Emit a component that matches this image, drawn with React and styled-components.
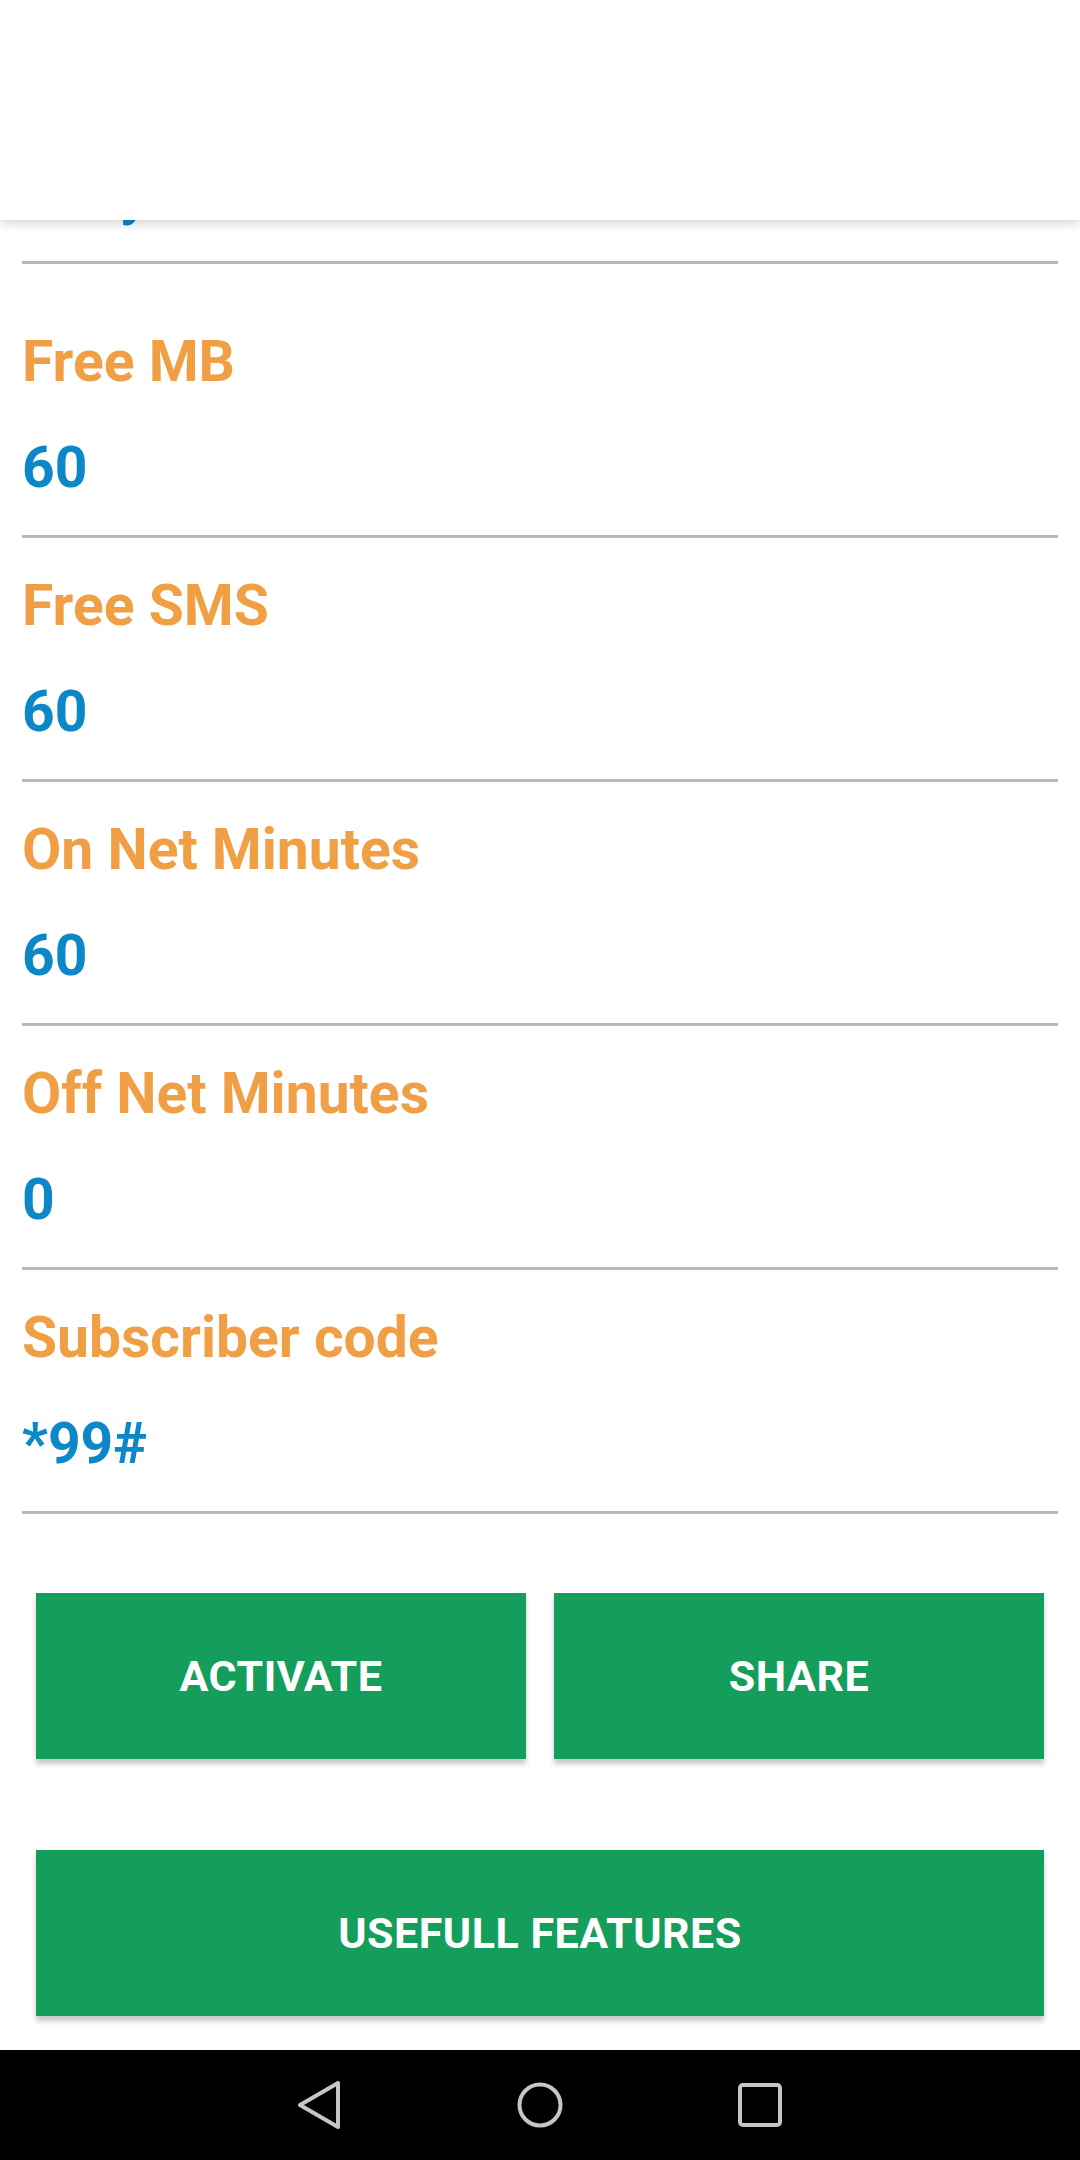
import React from "react"
import styled, { createGlobalStyle } from "styled-components"

const GlobalStyle = createGlobalStyle`
  html, body {
    margin: 0;
    padding: 0;
    background: #ffffff;
    font-family: Roboto, "Liberation Sans", sans-serif;
  }
`

const Page = styled.div`
  width: 1080px;
  height: 2160px;
  display: flex;
  flex-direction: column;
  overflow: hidden;
`

const Screen = styled.div`
  position: relative;
  flex: 1;
  overflow: hidden;
  background: #ffffff;
`

const AppBar = styled.div`
  position: absolute;
  top: 0;
  left: 0;
  right: 0;
  height: 220px;
  background: #ffffff;
  box-shadow: 0 3px 10px rgba(0, 0, 0, 0.18);
  z-index: 2;
`

const ScrollBody = styled.div`
  padding: 20px 22px 0;
`

const Row = styled.div`
  display: flex;
  flex-direction: column;
  gap: 38px;
  padding: ${(p) => (p.$first ? "64px" : "34px")} 0 33px;
  border-bottom: 3px solid #b8b8b8;
`

const Label = styled.div`
  color: #f09f45;
  font-size: 57px;
  font-weight: 700;
  line-height: 68px;
`

const Value = styled.div`
  color: #0c87c8;
  font-size: 57px;
  font-weight: 700;
  line-height: 68px;
`

const Actions = styled.div`
  display: flex;
  flex-direction: column;
  gap: 91px;
  padding: 79px 14px 0;
`

const ButtonRow = styled.div`
  display: flex;
  gap: 28px;
`

const ActionButton = styled.button`
  flex: 1;
  height: 166px;
  border: none;
  border-radius: 0;
  background: #149d5b;
  color: #ffffff;
  font-family: Roboto, "Liberation Sans", sans-serif;
  font-size: 43px;
  font-weight: 700;
  text-transform: uppercase;
  letter-spacing: 0.5px;
  box-shadow: 0 5px 5px rgba(0, 0, 0, 0.22);
  cursor: pointer;
`

const NavBar = styled.div`
  height: 110px;
  background: #000000;
  display: flex;
  justify-content: center;
  align-items: center;
`

const NavSlot = styled.div`
  width: 220px;
  display: flex;
  justify-content: center;
  align-items: center;
`

const items = [
  { label: "Free MB", value: "60" },
  { label: "Free SMS", value: "60" },
  { label: "On Net Minutes", value: "60" },
  { label: "Off Net Minutes", value: "0" },
  { label: "Subscriber code", value: "*99#" },
]

const navStroke = {
  fill: "none",
  stroke: "#c6c6c6",
  strokeWidth: 4,
  strokeLinejoin: "round",
}

export default function App() {
  return (
    <Page>
      <GlobalStyle />
      <Screen>
        <AppBar />
        <ScrollBody>
          <Row>
            <Label>Validity</Label>
            <Value>Daily</Value>
          </Row>
          {items.map((it, i) => (
            <Row key={it.label} $first={i === 0}>
              <Label>{it.label}</Label>
              <Value>{it.value}</Value>
            </Row>
          ))}
          <Actions>
            <ButtonRow>
              <ActionButton>Activate</ActionButton>
              <ActionButton>Share</ActionButton>
            </ButtonRow>
            <ButtonRow>
              <ActionButton>Usefull features</ActionButton>
            </ButtonRow>
          </Actions>
        </ScrollBody>
      </Screen>
      <NavBar>
        <NavSlot>
          <svg width="48" height="50" viewBox="0 0 48 50">
            <path d="M42 3 L4 25 L42 47 Z" {...navStroke} />
          </svg>
        </NavSlot>
        <NavSlot>
          <svg width="50" height="50" viewBox="0 0 50 50">
            <circle cx="25" cy="25" r="20.5" {...navStroke} />
          </svg>
        </NavSlot>
        <NavSlot>
          <svg width="50" height="50" viewBox="0 0 50 50">
            <rect x="5" y="5" width="40" height="40" rx="3" {...navStroke} />
          </svg>
        </NavSlot>
      </NavBar>
    </Page>
  )
}
